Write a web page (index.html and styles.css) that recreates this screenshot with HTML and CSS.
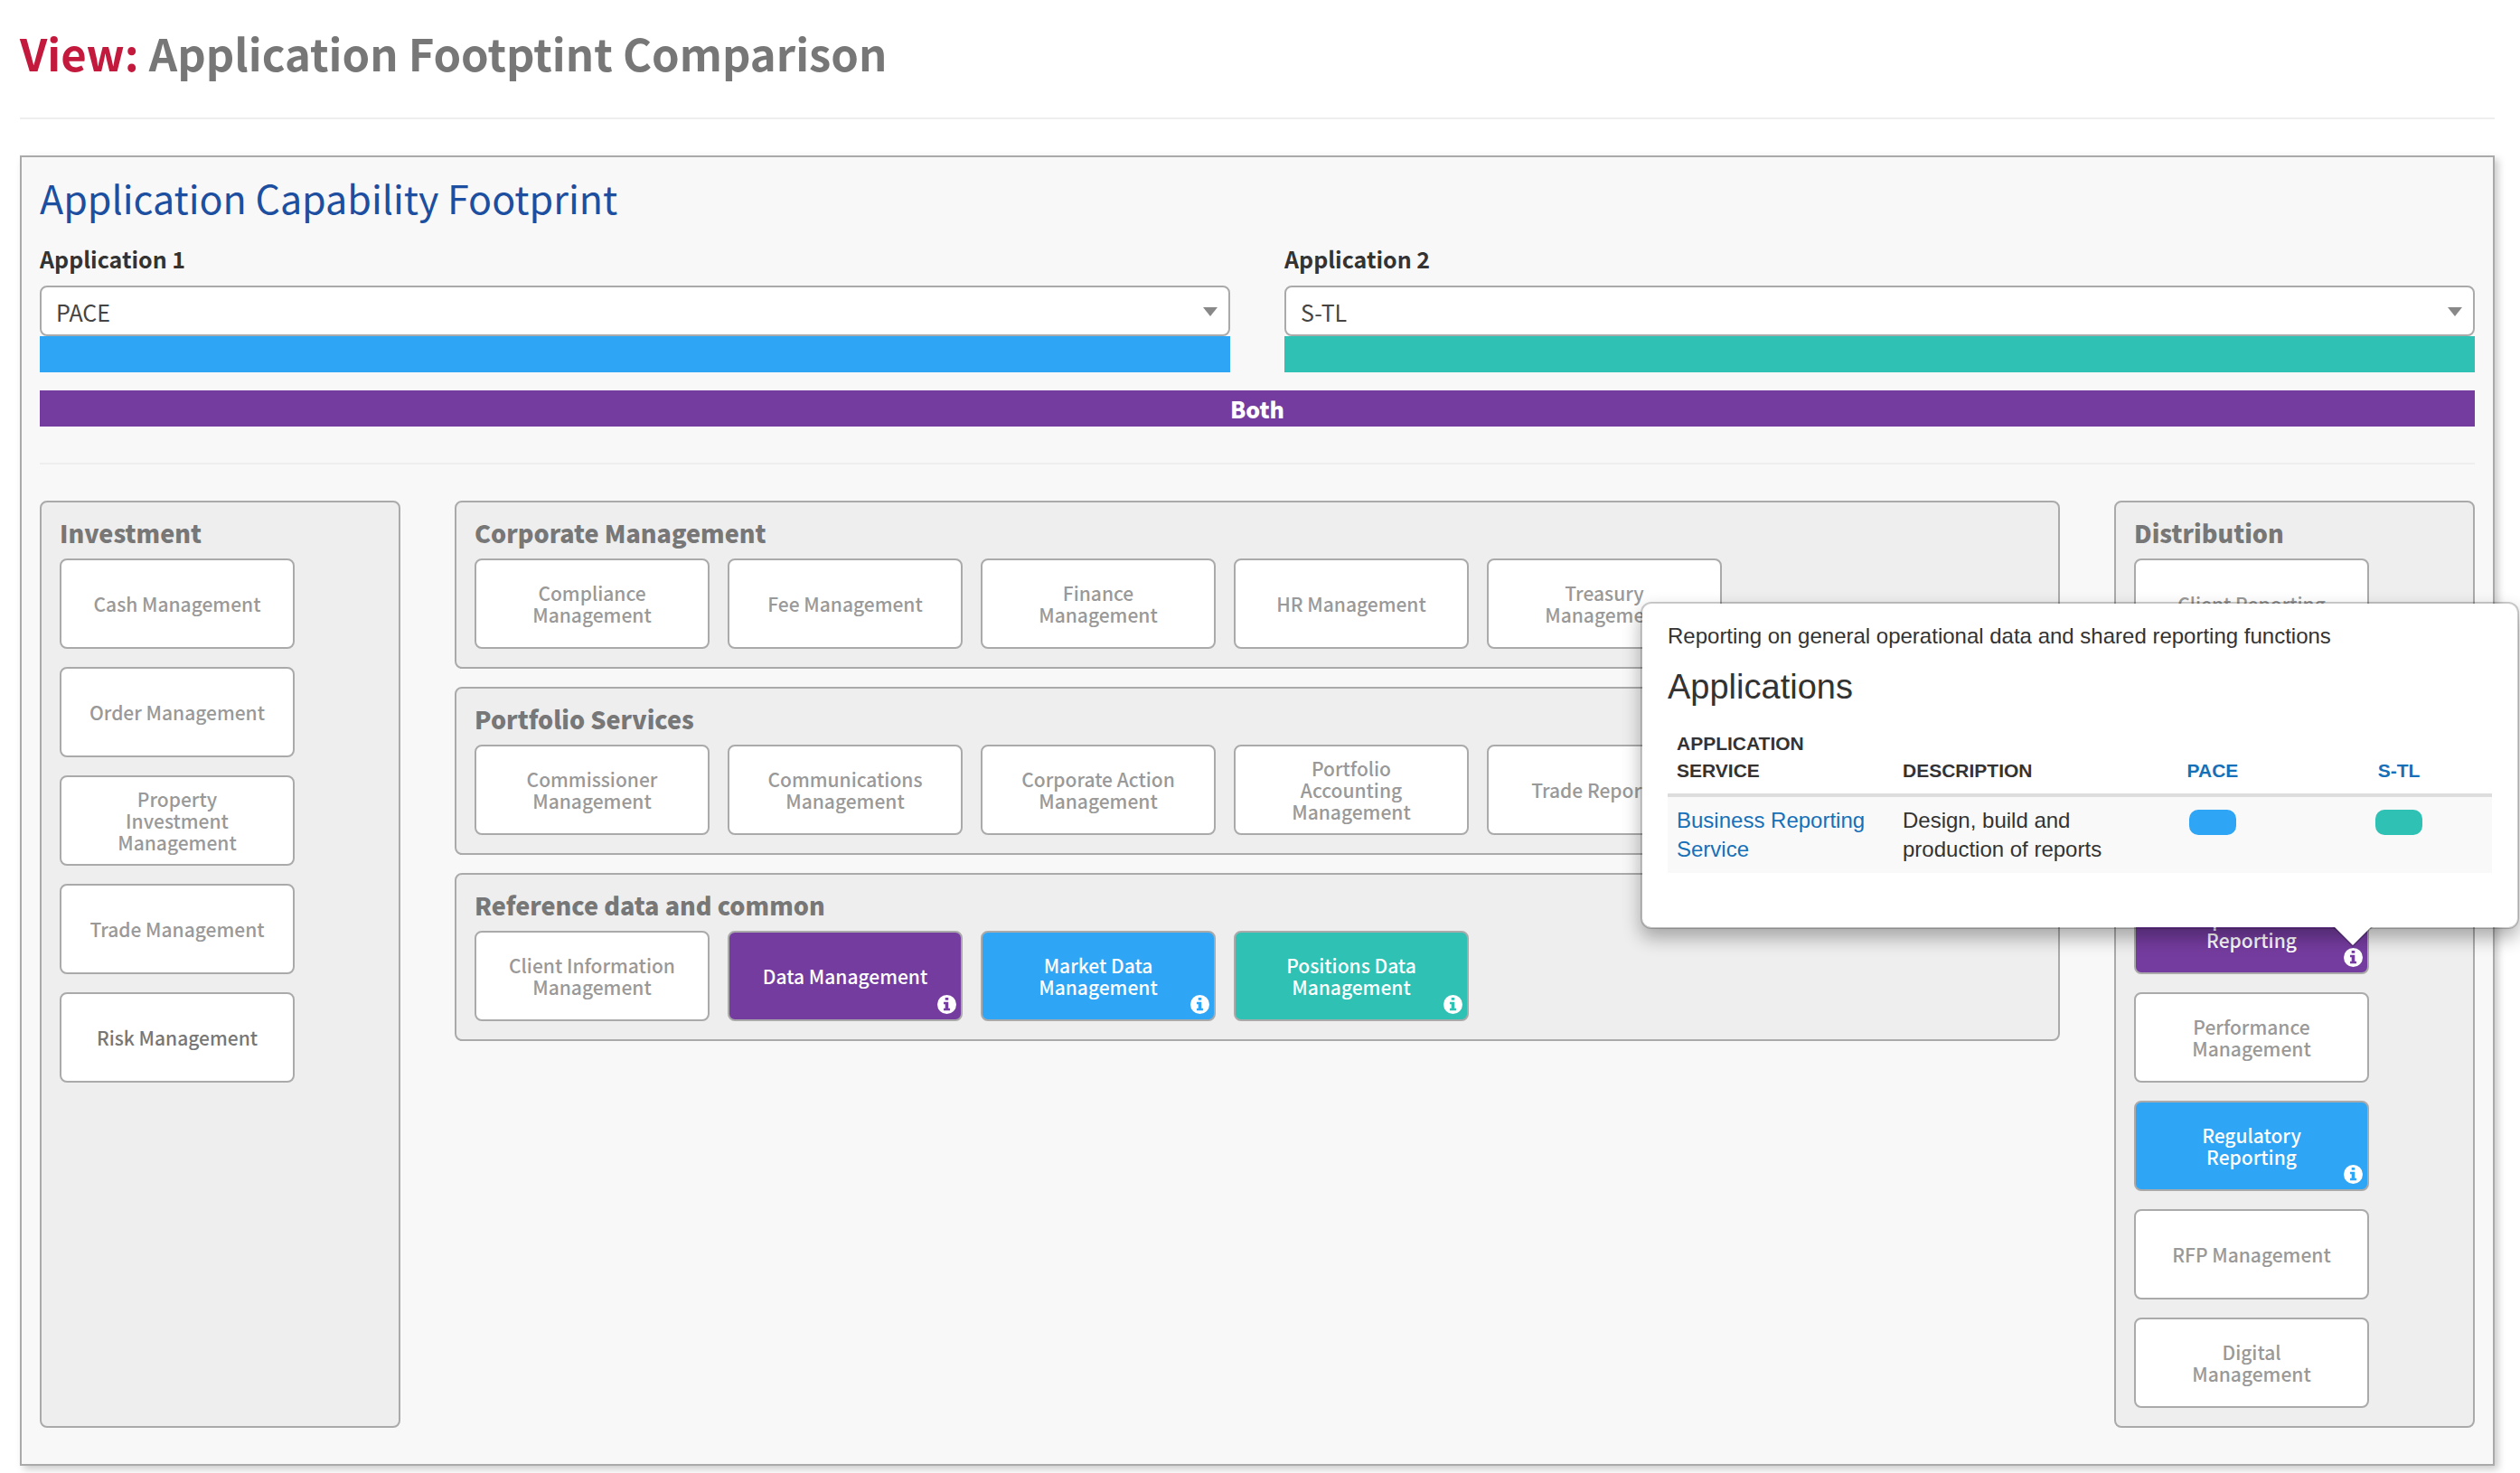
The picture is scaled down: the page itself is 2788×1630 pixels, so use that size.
FILE: index.html
```html
<!DOCTYPE html>
<html lang="en">
<head>
<meta charset="utf-8">
<title>Application Footptint Comparison</title>
<link rel="stylesheet" href="styles.css">
</head>
<body>
<svg class="sprite" aria-hidden="true">
  <symbol id="info" viewBox="0 0 20 20">
    <path fill="currentColor" fill-rule="evenodd" d="M10 0a10 10 0 1 0 0 20a10 10 0 0 0 0-20zM8.3 2.9h3.4v2.6H8.3zM6.7 7.3h5v6.7h1.6v2.5H6.7V14h1.6V9.8H6.7z"/>
  </symbol>
</svg>
<header class="page-header">
  <h1 class="page-title"><span class="accent">View:</span> Application Footptint Comparison</h1>
</header>
<main class="panel">
  <h2 class="panel-title">Application Capability Footprint</h2>
  <div class="pickers">
    <div class="picker">
      <label class="picker-label" for="app1">Application 1</label>
      <div class="select-wrap"><select class="select" id="app1"><option>PACE</option></select></div>
      <div class="bar blue"></div>
    </div>
    <div class="picker">
      <label class="picker-label" for="app2">Application 2</label>
      <div class="select-wrap"><select class="select" id="app2"><option>S-TL</option></select></div>
      <div class="bar teal"></div>
    </div>
  </div>
  <div class="bar both">Both</div>
  <hr class="rule">
  <div class="map">
    <section class="group side">
      <h3 class="group-title">Investment</h3>
      <div class="cards">
        <div class="card">Cash Management</div>
        <div class="card">Order Management</div>
        <div class="card">Property Investment Management</div>
        <div class="card">Trade Management</div>
        <div class="card dark">Risk Management</div>
      </div>
    </section>
    <div class="middle">
      <section class="group">
        <h3 class="group-title">Corporate Management</h3>
        <div class="cards">
          <div class="card">Compliance Management</div>
          <div class="card">Fee Management</div>
          <div class="card">Finance Management</div>
          <div class="card">HR Management</div>
          <div class="card">Treasury Management</div>
        </div>
      </section>
      <section class="group">
        <h3 class="group-title">Portfolio Services</h3>
        <div class="cards">
          <div class="card">Commissioner Management</div>
          <div class="card">Communications Management</div>
          <div class="card">Corporate Action Management</div>
          <div class="card">Portfolio Accounting Management</div>
          <div class="card">Trade Reporting</div>
        </div>
      </section>
      <section class="group">
        <h3 class="group-title">Reference data and common</h3>
        <div class="cards">
          <div class="card">Client Information Management</div>
          <div class="card used purple">Data Management<button class="info" aria-label="Data Management details"><svg><use href="#info"/></svg></button></div>
          <div class="card used blue">Market Data Management<button class="info" aria-label="Market Data Management details"><svg><use href="#info"/></svg></button></div>
          <div class="card used teal">Positions Data Management<button class="info" aria-label="Positions Data Management details"><svg><use href="#info"/></svg></button></div>
        </div>
      </section>
    </div>
    <section class="group side">
      <h3 class="group-title">Distribution</h3>
      <div class="cards">
        <div class="card">Client Reporting</div>
        <div class="card"></div>
        <div class="card"></div>
        <div class="card used purple">Operational Reporting<button class="info" aria-label="Operational Reporting details"><svg><use href="#info"/></svg></button>
          <div class="popover" role="dialog" aria-label="Operational Reporting">
            <p class="popover-text">Reporting on general operational data and shared reporting functions</p>
            <h4 class="popover-title">Applications</h4>
            <table class="services">
              <thead>
                <tr><th class="wide">Application Service</th><th class="wide">Description</th><th class="mark"><a href="#pace">PACE</a></th><th class="mark"><a href="#s-tl">S-TL</a></th></tr>
              </thead>
              <tbody>
                <tr><td><a href="#service">Business Reporting Service</a></td><td>Design, build and production of reports</td><td class="mark"><span class="pill blue"></span></td><td class="mark"><span class="pill teal"></span></td></tr>
              </tbody>
            </table>
            <svg class="arrow" viewBox="0 0 44 22"><path d="M0 0h44L22 22z" fill="#000" fill-opacity=".25"/><path d="M2 0h40L22 20z" fill="#fff"/></svg>
          </div>
        </div>
        <div class="card">Performance Management</div>
        <div class="card used blue">Regulatory Reporting<button class="info" aria-label="Regulatory Reporting details"><svg><use href="#info"/></svg></button></div>
        <div class="card">RFP Management</div>
        <div class="card">Digital Management</div>
      </div>
    </section>
  </div>
</main>
</body>
</html>
```
FILE: styles.css
```css
* { box-sizing: border-box; }

body {
  margin: 0;
  padding: 28px 28px 8px 22px;
  background: #fff;
  color: #333;
  font-family: "Noto Sans CJK SC", sans-serif;
}

h1, h2, h3, h4, p { margin: 0; }
a { color: #1670b8; text-decoration: none; }
.sprite { display: none; }

.page-header {
  padding-bottom: 42px;
  margin-bottom: 40px;
  border-bottom: 2px solid #eee;
}
.page-title {
  color: #777;
  font-size: 49px;
  font-weight: 700;
  line-height: 60px;
}
.accent { color: #c3193c; }

.panel {
  padding: 20px 20px 40px;
  border: 2px solid #aaa;
  background: #f8f8f8;
  box-shadow: 4px 4px 8px #ccc;
}
.panel-title {
  margin-bottom: 26px;
  color: #1c4fa0;
  font-size: 43px;
  font-weight: 400;
  line-height: 48px;
}

.pickers {
  display: grid;
  grid-template-columns: 1fr 1fr;
  gap: 60px;
  margin-bottom: 20px;
}
.picker-label {
  display: block;
  margin-bottom: 12px;
  font-size: 25px;
  font-weight: 700;
  line-height: 36px;
}
.select-wrap { position: relative; }
.select {
  display: block;
  width: 100%;
  height: 56px;
  padding: 2px 16px 0;
  appearance: none;
  border: 2px solid #aaa;
  border-radius: 8px;
  background: #fff;
  color: #444;
  font: 25px/40px "Noto Sans CJK SC", sans-serif;
}
.select-wrap::after {
  content: "";
  position: absolute;
  top: 24px;
  right: 14px;
  border: 8px solid transparent;
  border-top: 10px solid #888;
  border-bottom: 0;
}
.bar { height: 40px; }
.both {
  background: #743c9f;
  color: #fff;
  font-size: 25px;
  font-weight: 900;
  line-height: 40px;
  text-align: center;
}
.rule {
  margin: 40px 0;
  border: 0;
  border-top: 2px solid #eee;
}

.blue { background: #2ea5f5; }
.teal { background: #2ec1b4; }
.purple { background: #743c9f; }

.map {
  display: grid;
  grid-template-columns: repeat(12, 1fr);
  gap: 60px;
}
.middle {
  grid-column: span 8;
  display: flex;
  flex-direction: column;
  gap: 20px;
}
.side { grid-column: span 2; }
.group {
  padding: 20px;
  border: 2px solid #aaa;
  border-radius: 8px;
  background: #eee;
}
.group-title {
  margin-bottom: 14px;
  color: #777;
  font-size: 27px;
  font-weight: 900;
  line-height: 28px;
}
.cards {
  display: flex;
  flex-wrap: wrap;
  gap: 20px;
}
.side .cards { flex-direction: column; }
.card {
  position: relative;
  display: flex;
  align-items: center;
  justify-content: center;
  width: 260px;
  height: 100px;
  padding: 0 30px;
  border: 2px solid #aaa;
  border-radius: 8px;
  color: #999;
  font-size: 21px;
  font-weight: 500;
  line-height: 24px;
  text-align: center;
}
.card:not(.used) { background: #fff; }
.dark { color: #777; }
.used { color: #fff; }
.info {
  position: absolute;
  right: 5px;
  bottom: 6px;
  width: 21px;
  height: 21px;
  padding: 0;
  border: 0;
  background: none;
  color: #fff;
}
.info svg { display: block; width: 100%; height: 100%; }

.popover {
  position: absolute;
  right: -168px;
  bottom: 48px;
  z-index: 1;
  width: 972px;
  height: 362px;
  padding: 20px 28px;
  border: 2px solid rgba(0, 0, 0, .2);
  border-radius: 12px;
  background: #fff;
  background-clip: padding-box;
  box-shadow: 0 10px 20px rgba(0, 0, 0, .3);
  color: #333;
  font-family: "Liberation Sans", sans-serif;
  font-size: 24px;
  font-weight: 400;
  line-height: 32px;
  text-align: left;
}
.popover-text { margin-bottom: 20px; }
.popover-title {
  margin-bottom: 18px;
  font-size: 38px;
  font-weight: 400;
  line-height: 40px;
}
.services {
  width: 100%;
  border-collapse: collapse;
  table-layout: fixed;
}
.services th {
  padding: 10px;
  border-bottom: 4px solid #ddd;
  font-size: 21px;
  line-height: 30px;
  text-align: left;
  text-transform: uppercase;
  vertical-align: bottom;
}
.services td {
  padding: 10px;
  background: #f9f9f9;
  vertical-align: top;
}
.services .wide { width: 250px; }
.services .mark { text-align: center; }
.pill {
  display: block;
  width: 52px;
  height: 28px;
  margin: 4px auto 0;
  border-radius: 10px;
}
.arrow {
  position: absolute;
  right: 160px;
  bottom: -22px;
  width: 44px;
  height: 22px;
}
```
